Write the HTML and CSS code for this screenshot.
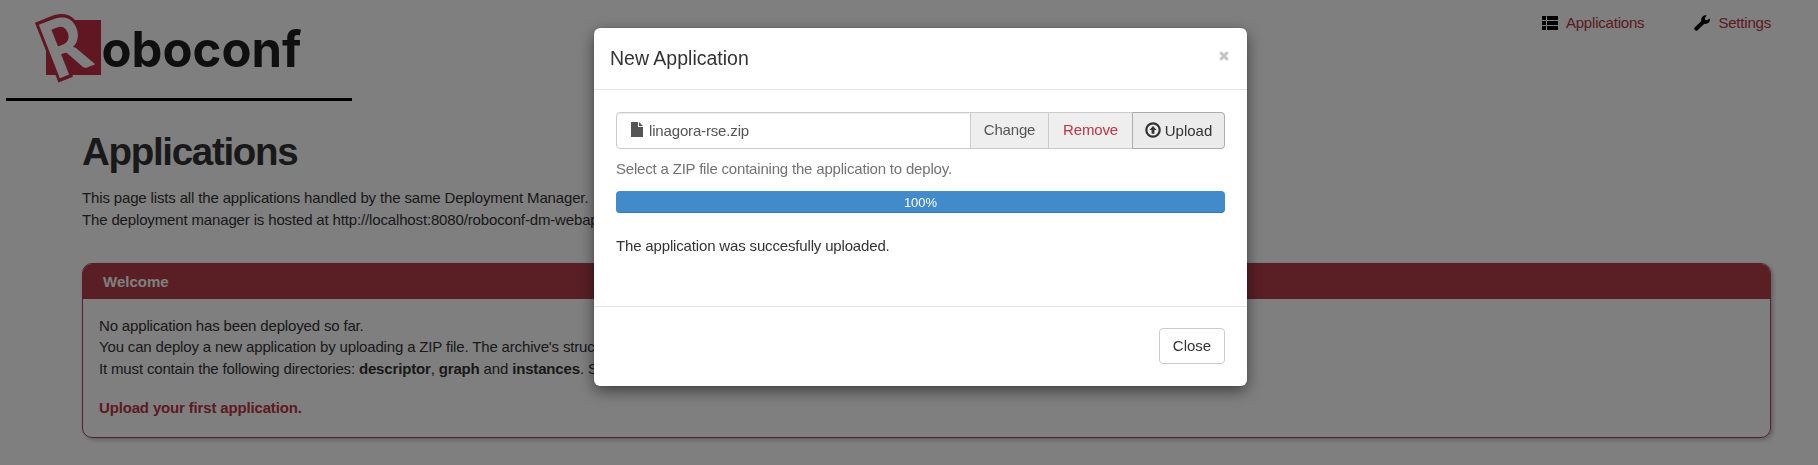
FILE: index.html
```html
<!DOCTYPE html>
<html lang="en">
<head>
<meta charset="utf-8">
<title>Roboconf</title>
<link rel="stylesheet" href="styles.css">
</head>
<body>
<div class="page">
  <header class="top">
    <div class="brand">
      <svg class="logo" width="346" height="98" viewBox="6 0 346 98">
        <rect x="46" y="20" width="55" height="55" fill="#c22f45"/>
        <text class="logo-r" transform="translate(59 78.500) rotate(-21.5) scale(.83 1)" x="-5" y="0">R</text>
        <text class="logo-word" x="101.500" y="66.500" textLength="200" lengthAdjust="spacingAndGlyphs">oboconf</text>
      </svg>
    </div>
    <nav class="nav">
      <a class="nav-item"><svg width="16" height="14" viewBox="0 0 16 14"><path d="M0 0h4v4H0zM5 0h11v4H5zM0 5h4v4H0zM5 5h11v4H5zM0 10h4v4H0zM5 10h11v4H5z"/></svg><span>Applications</span></a>
      <a class="nav-item"><svg width="16" height="16" viewBox="0 0 16 16"><path d="M12.600 .4 10.800 3.200l.5 1.500 1.700.5 2.700-1.800c.5 2-.1 3.400-1.200 4.400-1.200 1.100-2.700 1.300-4.200.9L3.600 15.200c-.7.7-1.800.7-2.500.1l-.5-.5c-.6-.7-.6-1.700.1-2.400l6.700-6.300c-.5-1.500-.2-3 .8-4.200C9.300.8 10.700 0 12.600.4z"/></svg><span>Settings</span></a>
    </nav>
  </header>
  <main class="content">
    <h1>Applications</h1>
    <p class="intro">This page lists all the applications handled by the same Deployment Manager.<br>The deployment manager is hosted at http://localhost:8080/roboconf-dm-webapp</p>
    <section class="panel">
      <h2 class="panel-head">Welcome</h2>
      <div class="panel-body">
        <p>No application has been deployed so far.<br>You can deploy a new application by uploading a ZIP file. The archive's structure<br>It must contain the following directories: <b>descriptor</b>, <b>graph</b> and <b>instances</b>. See</p>
        <a class="first">Upload your first application.</a>
      </div>
    </section>
  </main>
</div>
<div class="backdrop">
  <div class="modal">
    <div class="modal-head"><h4>New Application</h4><svg class="x" width="10" height="10" viewBox="0 0 10 10"><path d="M1.300 1.300l7.400 7.400M8.700 1.300 1.300 8.700"/></svg></div>
    <div class="modal-body">
      <div class="group">
        <div class="file"><svg width="12" height="15" viewBox="0 0 12 15"><path d="M0 0h7v5h5v10H0zM8 0l4 4H8z"/></svg><span>linagora-rse.zip</span></div>
        <div class="addon change">Change</div>
        <div class="addon remove">Remove</div>
        <div class="addon upload"><svg width="16" height="16" viewBox="0 0 16 16"><circle cx="8" cy="8" r="6.700"/><path d="M8 3.900 11.500 8H9.400v3.800H6.600V8H4.500z"/></svg><span>Upload</span></div>
      </div>
      <p class="help">Select a ZIP file containing the application to deploy.</p>
      <div class="progress">100%</div>
      <p class="done">The application was succesfully uploaded.</p>
    </div>
    <div class="modal-foot"><button class="close">Close</button></div>
  </div>
</div>
</body>
</html>
```
FILE: styles.css
```css
* { box-sizing: border-box; }
html, body { height: 100%; overflow: hidden; }
body { margin: 0; background: #fff; color: #333; font: 15px/21.43px "Liberation Sans", Arial, sans-serif; letter-spacing: -.16px; }
p, h1, h2, h4 { margin: 0; }
.top { display: flex; justify-content: space-between; align-items: flex-start; height: 101px; padding-left: 6px; padding-right: 47px; }
.brand { width: 346px; height: 101px; border-bottom: 3px solid #000; }
.logo { display: block; overflow: visible; letter-spacing: 0; }
.logo-r { font: 900 79px Lato, sans-serif; fill: #fff; stroke: #c22f45; stroke-width: 7px; paint-order: stroke; }
.logo-word { font: 700 50px Inter, sans-serif; fill: #1e1e20; }
.nav { display: flex; gap: 50px; padding-top: 12px; color: #b33441; }
.nav-item { display: flex; align-items: center; gap: 8px; letter-spacing: -.2px; }
.nav-item svg { fill: #000; }
.content { padding: 29px 47px 0 82px; }
h1 { font-size: 38.5px; line-height: 43px; letter-spacing: -1.3px; }
.intro { margin-top: 14px; line-height: 22px; letter-spacing: -.15px; }
.panel { margin-top: 32px; height: 175px; border: 1px solid #b33e4a; border-radius: 10px; box-shadow: 2px 2px 4px rgba(0,0,0,.25); overflow: hidden; }
.panel-head { height: 35px; padding-left: 20px; background: #b33e4a; color: #fff; font-size: 15px; line-height: 35px; letter-spacing: 0; }
.panel-body { padding: 16px; }
.first { display: block; margin-top: 18px; color: #b93443; font-weight: bold; }
.backdrop { position: fixed; inset: 0; display: flex; justify-content: center; align-items: flex-start; padding: 28px 0 0 23px; background: rgba(0,0,0,.5); }
.modal { width: 653px; height: 358px; background: #fff; border-radius: 6px; box-shadow: 0 5px 15px rgba(0,0,0,.5), 0 0 1px rgba(0,0,0,.5); }
.modal-head { height: 62px; display: flex; justify-content: space-between; padding: 20px 18px 0 16px; border-bottom: 1px solid #e5e5e5; }
h4 { font-size: 19.5px; line-height: 21px; font-weight: normal; letter-spacing: 0; }
.x { margin-top: 3px; fill: none; stroke: #c4c4c4; stroke-width: 3px; }
.modal-body { height: 216px; padding: 22px; }
.group { display: flex; height: 37px; border: 1px solid #ccc; border-radius: 4px; line-height: 35px; color: #555; }
.file { flex: 1; display: flex; align-items: center; gap: 6px; padding-left: 14px; box-shadow: inset 0 1px 1px rgba(0,0,0,.075); border-radius: 4px; }
.file svg { fill: #555; margin-top: -3px; }
.addon { background: #eee; border-left: 1px solid #ccc; text-align: center; line-height: 33px; }
.change { width: 78px; }
.remove { width: 84px; color: #c23345; }
.upload { display: flex; align-items: center; justify-content: center; gap: 4px; width: 93px; margin: -1px -1px -1px 0; background: #ebebeb; border: 1px solid #adadad; border-radius: 0 4px 4px 0; color: #333; letter-spacing: 0; }
.upload svg { margin-top: -2px; }
.upload circle { fill: none; stroke: #333; stroke-width: 2.200px; }
.upload path { fill: #333; }
.help { margin-top: 9px; color: #737373; letter-spacing: -.19px; }
.progress { height: 22px; margin-top: 12px; border-radius: 4px; background: #428bca; box-shadow: inset 0 -1px 0 rgba(0,0,0,.15); color: #fff; font-size: 13px; line-height: 23px; text-align: center; letter-spacing: 0; }
.done { margin-top: 22px; }
.modal-foot { display: flex; justify-content: flex-end; padding: 21px 22px; border-top: 1px solid #e5e5e5; }
.close { width: 66px; height: 36px; padding: 0; background: #fff; border: 1px solid #ccc; border-radius: 4px; color: #333; font: inherit; }
```
